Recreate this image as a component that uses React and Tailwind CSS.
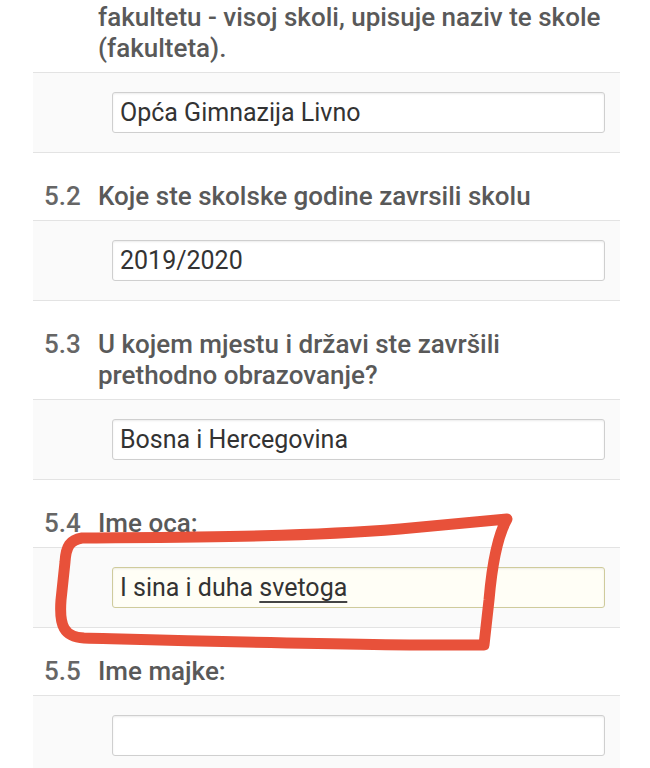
import React from 'react'

function Label({ num, children, first }) {
  return (
    <div className={`flex pl-[44px] pr-[10px] mb-[8px] text-[26px] leading-[31px] font-medium text-[#595959] ${first ? '' : 'pt-[28px]'}`}>
      <span className="w-[54px] shrink-0 text-[#666]">{num}</span>
      <span className="whitespace-nowrap">{children}</span>
    </div>
  )
}

function Panel({ value, highlight }) {
  return (
    <div className="ml-[33px] w-[587px] border-y border-[#e3e3e3] bg-[#fafafa] py-[19px] pl-[79px] pr-[15px]">
      <div
        className={`h-[41px] rounded-[3px] border flex items-center pl-[7px] text-[25px] text-[#333] shadow-[inset_0_1px_2px_rgba(0,0,0,0.08)] ${
          highlight ? 'border-[#cfcb9c] bg-[#fffef6]' : 'border-[#cfcfcf] bg-white'
        }`}
      >
        {value}
      </div>
    </div>
  )
}

export default function App() {
  return (
    <div className="relative w-[650px] h-[768px] overflow-hidden bg-white font-['Roboto',sans-serif]">
      <div className="-mt-[29px]">
        <Label num="" first>
          Ukoliko je kandidat prethodno upisan na
          <br />
          fakultetu - visoj skoli, upisuje naziv te skole
          <br />
          (fakulteta).
        </Label>
        <Panel value="Opća Gimnazija Livno" />

        <Label num="5.2">Koje ste skolske godine zavrsili skolu</Label>
        <Panel value="2019/2020" />

        <Label num="5.3">
          U kojem mjestu i državi ste završili
          <br />
          prethodno obrazovanje?
        </Label>
        <Panel value="Bosna i Hercegovina" />

        <Label num="5.4">Ime oca:</Label>
        <Panel
          highlight
          value={
            <span>
              I sina i duha{' '}
              <span className="underline decoration-[#444] decoration-2 underline-offset-[5px]">svetoga</span>
            </span>
          }
        />

        <Label num="5.5">Ime majke:</Label>
        <Panel value="" />
      </div>

      <svg className="absolute inset-0 pointer-events-none" width="650" height="768" viewBox="0 0 650 768">
        <path
          d="M82 538 C 200 537, 300 537, 400 529 L 507 519 C 498 535, 492 565, 489 600 L 484 645 C 380 646, 200 641, 84 638 C 64 637, 59 626, 61 600 L 65 562 C 66 546, 70 540, 82 538 Z"
          fill="none"
          stroke="#e8513a"
          strokeWidth="11"
          strokeLinejoin="round"
          strokeLinecap="round"
        />
      </svg>
    </div>
  )
}
